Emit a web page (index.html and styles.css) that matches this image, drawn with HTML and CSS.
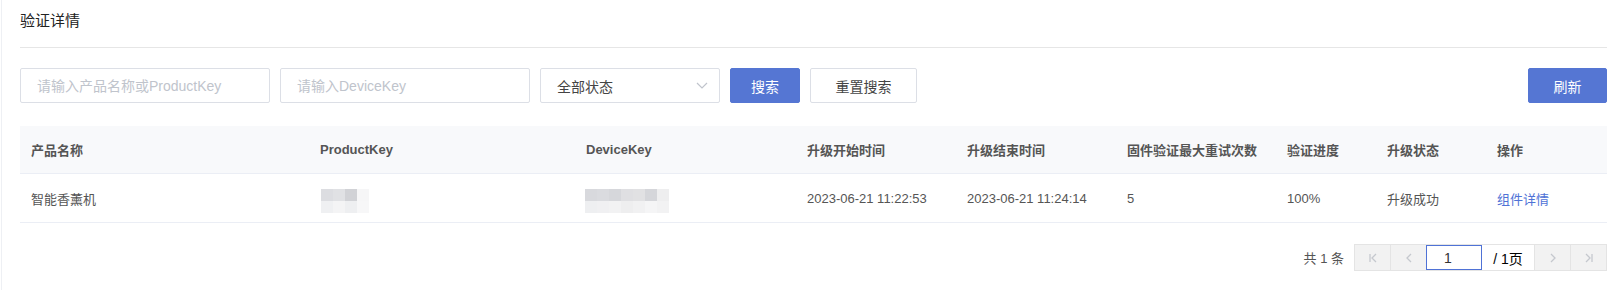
FILE: index.html
```html
<!DOCTYPE html>
<html>
<head>
  <meta charset="utf-8">
  <title>验证详情</title>
  <link rel="stylesheet" href="styles.css">
</head>
<body>
  <div class="page">
    <div class="page-title">
      <h1>验证详情</h1>
    </div>

    <div class="toolbar">
      <input class="field" type="text" placeholder="请输入产品名称或ProductKey">
      <input class="field" type="text" placeholder="请输入DeviceKey">
      <div class="select">
        <span>全部状态</span>
        <svg class="select-arrow" width="12" height="7" viewBox="0 0 12 7">
          <path d="M1 1 L6 6 L11 1" fill="none" stroke="#c0c4cc" stroke-width="1.2"/>
        </svg>
      </div>
      <button class="btn btn-primary btn-search">搜索</button>
      <button class="btn btn-default">重置搜索</button>
      <div class="spacer"></div>
      <button class="btn btn-primary btn-refresh">刷新</button>
    </div>

    <table class="grid">
      <colgroup>
        <col style="width: 289px">
        <col style="width: 266px">
        <col style="width: 221px">
        <col style="width: 160px">
        <col style="width: 160px">
        <col style="width: 160px">
        <col style="width: 100px">
        <col style="width: 110px">
        <col style="width: 121px">
      </colgroup>
      <thead>
        <tr>
          <th>产品名称</th>
          <th>ProductKey</th>
          <th>DeviceKey</th>
          <th>升级开始时间</th>
          <th>升级结束时间</th>
          <th>固件验证最大重试次数</th>
          <th>验证进度</th>
          <th>升级状态</th>
          <th>操作</th>
        </tr>
      </thead>
      <tbody>
        <tr>
          <td>智能香薰机</td>
          <td><div class="mask mask-pk"></div></td>
          <td><div class="mask mask-dk"></div></td>
          <td>2023-06-21 11:22:53</td>
          <td>2023-06-21 11:24:14</td>
          <td>5</td>
          <td>100%</td>
          <td>升级成功</td>
          <td><a class="link" href="#">组件详情</a></td>
        </tr>
      </tbody>
    </table>

    <div class="pager">
      <span class="pager-total">共 1 条</span>
      <div class="pager-box">
        <span class="pager-btn">
          <svg width="10" height="10" viewBox="0 0 10 10"><path d="M2 1 V9 M8 1 L4 5 L8 9" fill="none" stroke="#c5c8ce" stroke-width="1.3"/></svg>
        </span>
        <span class="pager-btn">
          <svg width="10" height="10" viewBox="0 0 10 10"><path d="M7 1 L3 5 L7 9" fill="none" stroke="#c5c8ce" stroke-width="1.3"/></svg>
        </span>
        <input class="pager-input" type="text" value="1">
        <span class="pager-count">/ 1页</span>
        <span class="pager-btn">
          <svg width="10" height="10" viewBox="0 0 10 10"><path d="M3 1 L7 5 L3 9" fill="none" stroke="#c5c8ce" stroke-width="1.3"/></svg>
        </span>
        <span class="pager-btn">
          <svg width="10" height="10" viewBox="0 0 10 10"><path d="M2 1 L6 5 L2 9 M8 1 V9" fill="none" stroke="#c5c8ce" stroke-width="1.3"/></svg>
        </span>
      </div>
    </div>
  </div>
</body>
</html>
```

FILE: styles.css
```css
body {
  margin: 0;
  padding-left: 1px;
  background-color: #fff;
  font-family: 'Liberation Sans', 'Noto Sans CJK SC', sans-serif;
  color: #555;
}
.page {
  border-left: 1px solid #eef0f4;
  padding: 11px 14px 20px 18px;
  min-height: 260px;
}
.page-title {
  height: 36px;
  border-bottom: 1px solid #e6e6e6;
}
.page-title h1 {
  margin: 0;
  font-size: 15px;
  line-height: 20px;
  font-weight: normal;
  color: #222;
}
.toolbar {
  display: flex;
  gap: 10px;
  margin-top: 20px;
  height: 35px;
}
.field {
  width: 250px;
  height: 35px;
  box-sizing: border-box;
  border: 1px solid #dcdfe6;
  border-radius: 2px;
  padding: 0 16px;
  font-family: inherit;
  font-size: 14px;
  color: #555;
  outline: none;
}
.field::placeholder {
  color: #c0c4cc;
}
.select {
  width: 180px;
  height: 35px;
  box-sizing: border-box;
  border: 1px solid #dcdfe6;
  border-radius: 2px;
  padding: 0 11px 0 16px;
  display: flex;
  align-items: center;
  justify-content: space-between;
  font-size: 14px;
  color: #444;
}
.btn {
  height: 35px;
  box-sizing: border-box;
  border-radius: 2px;
  font-family: inherit;
  font-size: 14px;
  cursor: pointer;
}
.btn-primary {
  background-color: #5576d3;
  border: 1px solid #5576d3;
  color: #fff;
}
.btn-default {
  width: 107px;
  background-color: #fff;
  border: 1px solid #dcdfe6;
  color: #444;
}
.btn-search {
  width: 70px;
}
.btn-refresh {
  width: 79px;
}
.spacer {
  flex: 1;
}
.grid {
  width: 1587px;
  margin-top: 23px;
  border-collapse: collapse;
  table-layout: fixed;
  font-size: 13px;
}
.grid th {
  height: 47px;
  padding: 0 11px;
  background-color: #f8f9fb;
  border-bottom: 1px solid #ebeef5;
  text-align: left;
  font-weight: bold;
  color: #555;
}
.grid td {
  height: 48px;
  padding: 0 11px;
  border-bottom: 1px solid #ebeef5;
  color: #555;
}
.mask {
  height: 24px;
  margin-top: 6px;
}
.mask-pk {
  width: 48px;
  margin-left: 1px;
  background:
    linear-gradient(to right, #dcdde1 0 12px, #e0e1e4 12px 24px, #d1d2d6 24px 36px, #f6f6f7 36px) top / 100% 12px no-repeat,
    linear-gradient(to right, #eff0f2 0 12px, #f4f4f5 12px 24px, #eeeff1 24px 36px, #f7f7f8 36px) bottom / 100% 12px no-repeat;
}
.mask-dk {
  width: 84px;
  margin-left: -1px;
  background:
    linear-gradient(to right, #d8d9dd 0 12px, #dadbdf 12px 24px, #d6d7db 24px 36px, #dfdfe2 36px 48px, #e1e1e3 48px 60px, #d5d6da 60px 72px, #eeeeef 72px) top / 100% 12px no-repeat,
    linear-gradient(to right, #eeeff1 0 12px, #f0f0f2 12px 24px, #f2f2f3 24px 36px, #eeeeef 36px 48px, #f1f1f2 48px 60px, #f5f5f6 60px 72px, #f2f2f3 72px) bottom / 100% 12px no-repeat;
}
.link {
  color: #4f72d6;
  text-decoration: none;
}
.pager {
  display: flex;
  justify-content: flex-end;
  align-items: center;
  margin-top: 21px;
}
.pager-total {
  font-size: 13px;
  color: #555;
  margin-right: 10px;
}
.pager-box {
  display: flex;
  height: 25px;
  border: 1px solid #e4e4e4;
}
.pager-btn {
  width: 35px;
  display: flex;
  align-items: center;
  justify-content: center;
  background-color: #f2f2f2;
  border-right: 1px solid #e4e4e4;
}
.pager-btn:last-child {
  border-right: none;
}
.pager-input {
  width: 56px;
  height: 25px;
  box-sizing: border-box;
  border: 1px solid #4f72d6;
  margin: 0 0 0 -1px;
  padding: 0 0 0 17px;
  font-family: inherit;
  font-size: 14px;
  color: #333;
  outline: none;
}
.pager-count {
  width: 52px;
  display: flex;
  align-items: center;
  justify-content: center;
  border-right: 1px solid #e4e4e4;
  font-size: 14px;
  color: #000;
}
```
